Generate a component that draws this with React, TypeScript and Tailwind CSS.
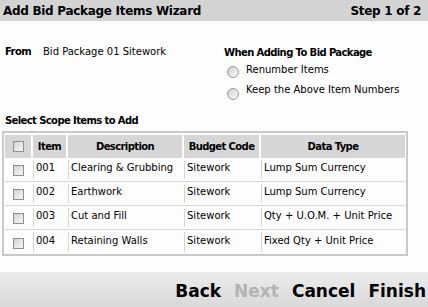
import React from "react";

const rows = [
  { item: "001", desc: "Clearing & Grubbing", code: "Sitework", type: "Lump Sum Currency" },
  { item: "002", desc: "Earthwork", code: "Sitework", type: "Lump Sum Currency" },
  { item: "003", desc: "Cut and Fill", code: "Sitework", type: "Qty + U.O.M. + Unit Price" },
  { item: "004", desc: "Retaining Walls", code: "Sitework", type: "Fixed Qty + Unit Price" },
];

const Checkbox = () => (
  <span className="block h-[11px] w-[11px] border border-[#8e8e8e] bg-gradient-to-br from-[#d4d4d4] to-[#f7f7f7]" />
);

const Radio = () => (
  <span className="block h-[12px] w-[12px] rounded-full border border-[#9a9a9a] bg-gradient-to-br from-[#d0d0d0] to-[#fafafa]" />
);

const cols = "grid grid-cols-[26px_33px_114px_75px_1fr] gap-x-[2px]";
const bold = "font-bold tracking-[-0.6px]";

export default function App() {
  return (
    <div
      className="flex h-[307px] w-[428px] flex-col bg-[#fdfdfd] text-[10px] leading-[14px] text-black"
      style={{ fontFamily: '"DejaVu Sans", Verdana, sans-serif' }}
    >
      {/* HEADER */}
      <div className="flex h-[21px] items-center justify-between bg-[#d3d3d3] px-[3px] text-[12px] font-bold tracking-[-0.3px]">
        <span>Add Bid Package Items Wizard</span>
        <span className="pr-[4px]">Step 1 of 2</span>
      </div>

      {/* OPTIONS */}
      <div className="flex pt-[24px]">
        <div className="flex w-[224px] pl-[5px]">
          <span className={`w-[38px] ${bold}`}>From</span>
          <span>Bid Package 01 Sitework</span>
        </div>
        <div className="flex flex-col">
          <span className={`pt-[1px] ${bold}`}>When Adding To Bid Package</span>
          <div className="mt-[3px] flex h-[14px] items-center gap-[7px] pl-[3px]">
            <span className="mt-[4px]"><Radio /></span>
            <span>Renumber Items</span>
          </div>
          <div className="mt-[6px] flex h-[14px] items-center gap-[7px] pl-[3px]">
            <span className="mt-[7px]"><Radio /></span>
            <span>Keep the Above Item Numbers</span>
          </div>
        </div>
      </div>

      <div className={`mt-[17px] pl-[5px] ${bold}`}>Select Scope Items to Add</div>

      {/* TABLE */}
      <div className="ml-[2px] mt-[3px] w-[406px] border-2 border-[#c9c9c9] px-[1px] pt-[2px]">
        <div className={`${cols} h-[23px] ${bold}`}>
          <div className="flex items-center justify-center bg-[#d6d6d6]">
            <Checkbox />
          </div>
          <div className="flex items-center justify-center bg-[#d6d6d6]">Item</div>
          <div className="flex items-center justify-center bg-[#d6d6d6]">Description</div>
          <div className="flex items-center justify-center bg-[#d6d6d6]">Budget Code</div>
          <div className="flex items-center justify-center bg-[#d6d6d6]">Data Type</div>
        </div>
        {rows.map((r, i) => (
          <div
            key={r.item}
            className={`${cols} h-[24px] py-[2px] ${i < rows.length - 1 ? "border-b border-[#d4d4d4]" : ""}`}
          >
            <div className="flex items-center justify-center pt-[2px]">
              <Checkbox />
            </div>
            <div className="flex items-center border-l border-[#d4d4d4] pb-[3px] pl-[2px]">{r.item}</div>
            <div className="flex items-center border-l border-[#d4d4d4] pb-[3px] pl-[2px]">{r.desc}</div>
            <div className="flex items-center border-l border-[#d4d4d4] pb-[3px] pl-[2px]">{r.code}</div>
            <div className="flex items-center border-l border-[#d4d4d4] pb-[3px] pl-[2px]">{r.type}</div>
          </div>
        ))}
      </div>

      {/* FOOTER */}
      <div className="mt-auto flex h-[35px] items-center justify-end gap-[13px] bg-gradient-to-b from-[#ececec] to-[#d9d9d9] pr-[2px] pt-[2px] text-[17px] font-bold leading-[20px]">
        <span>Back</span>
        <span className="text-[#b3b3b3]">Next</span>
        <span>Cancel</span>
        <span>Finish</span>
      </div>
    </div>
  );
}
